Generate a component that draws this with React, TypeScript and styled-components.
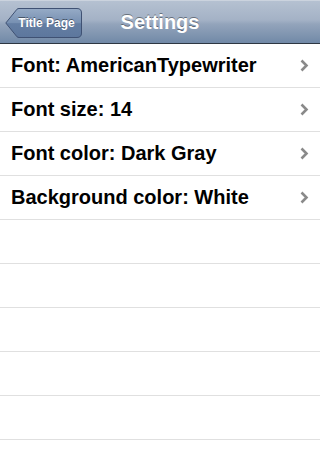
import React from "react";
import styled, { createGlobalStyle } from "styled-components";

const GlobalStyle = createGlobalStyle`
  html, body {
    margin: 0;
    padding: 0;
    background: #ffffff;
    font-family: "Liberation Sans", Arial, sans-serif;
  }
`;

const Screen = styled.div`
  width: 320px;
  height: 460px;
  overflow: hidden;
  background: #ffffff;
  display: flex;
  flex-direction: column;
`;

const NavBar = styled.header`
  height: 42px;
  flex-shrink: 0;
  display: flex;
  align-items: center;
  position: relative;
  background: linear-gradient(180deg, #b5c1d1 0%, #a4b2c6 45%, #93a4bb 55%, #7189a7 100%);
  border-top: 1px solid #cbd3de;
  border-bottom: 1px solid #2d3642;
`;

const BackButton = styled.button`
  position: relative;
  margin-left: 5px;
  margin-top: 1px;
  width: 77px;
  height: 30px;
  padding: 0 0 0 6px;
  border: none;
  background: transparent;
  color: #ffffff;
  font-family: "Liberation Sans", Arial, sans-serif;
  font-weight: bold;
  font-size: 12px;
  text-shadow: 0 -1px 0 rgba(0, 0, 0, 0.45);
  cursor: pointer;
  display: flex;
  align-items: center;
  justify-content: center;

  svg {
    position: absolute;
    inset: 0;
  }

  span {
    position: relative;
  }
`;

const Title = styled.h1`
  position: absolute;
  inset: 0;
  margin: 0;
  display: flex;
  align-items: center;
  justify-content: center;
  font-size: 20px;
  font-weight: bold;
  color: #ffffff;
  text-shadow: 0 -1px 0 rgba(0, 0, 0, 0.4);
  pointer-events: none;
`;

const List = styled.ul`
  list-style: none;
  margin: 0;
  padding: 0;
  flex: 1;
`;

const Row = styled.li`
  height: 43px;
  border-bottom: 1px solid #e0e0e0;
  display: flex;
  align-items: center;
  justify-content: space-between;
  padding: 0 11px 0 11px;
  font-size: 20px;
  font-weight: bold;
  color: #000000;
`;

const Chevron = () => (
  <svg width="9" height="13" viewBox="0 0 9 13">
    <path d="M1.5 1.5 L6.5 6.5 L1.5 11.5" fill="none" stroke="#8a8a8a" strokeWidth="2.6" />
  </svg>
);

const settings = [
  "Font: AmericanTypewriter",
  "Font size: 14",
  "Font color: Dark Gray",
  "Background color: White",
];

const App = () => {
  return (
    <Screen>
      <GlobalStyle />
      <NavBar>
        <BackButton>
          <svg width="77" height="30" viewBox="0 0 77 30">
            <defs>
              <linearGradient id="bb" x1="0" y1="0" x2="0" y2="1">
                <stop offset="0" stopColor="#96abc6" />
                <stop offset="0.5" stopColor="#7790b2" />
                <stop offset="0.52" stopColor="#647ea3" />
                <stop offset="1" stopColor="#5d779d" />
              </linearGradient>
            </defs>
            <path
              d="M0.8 15 L12 1.2 Q12.8 0.5 14 0.5 L72 0.5 Q76.5 0.5 76.5 5 L76.5 25 Q76.5 29.5 72 29.5 L14 29.5 Q12.8 29.5 12 28.8 Z"
              fill="url(#bb)"
              stroke="#3f5173"
              strokeWidth="1"
            />
          </svg>
          <span>Title Page</span>
        </BackButton>
        <Title>Settings</Title>
      </NavBar>
      <List>
        {settings.map((s) => (
          <Row key={s}>
            {s}
            <Chevron />
          </Row>
        ))}
        {Array.from({ length: 6 }).map((_, i) => (
          <Row key={i} />
        ))}
      </List>
    </Screen>
  );
};

export default App;
